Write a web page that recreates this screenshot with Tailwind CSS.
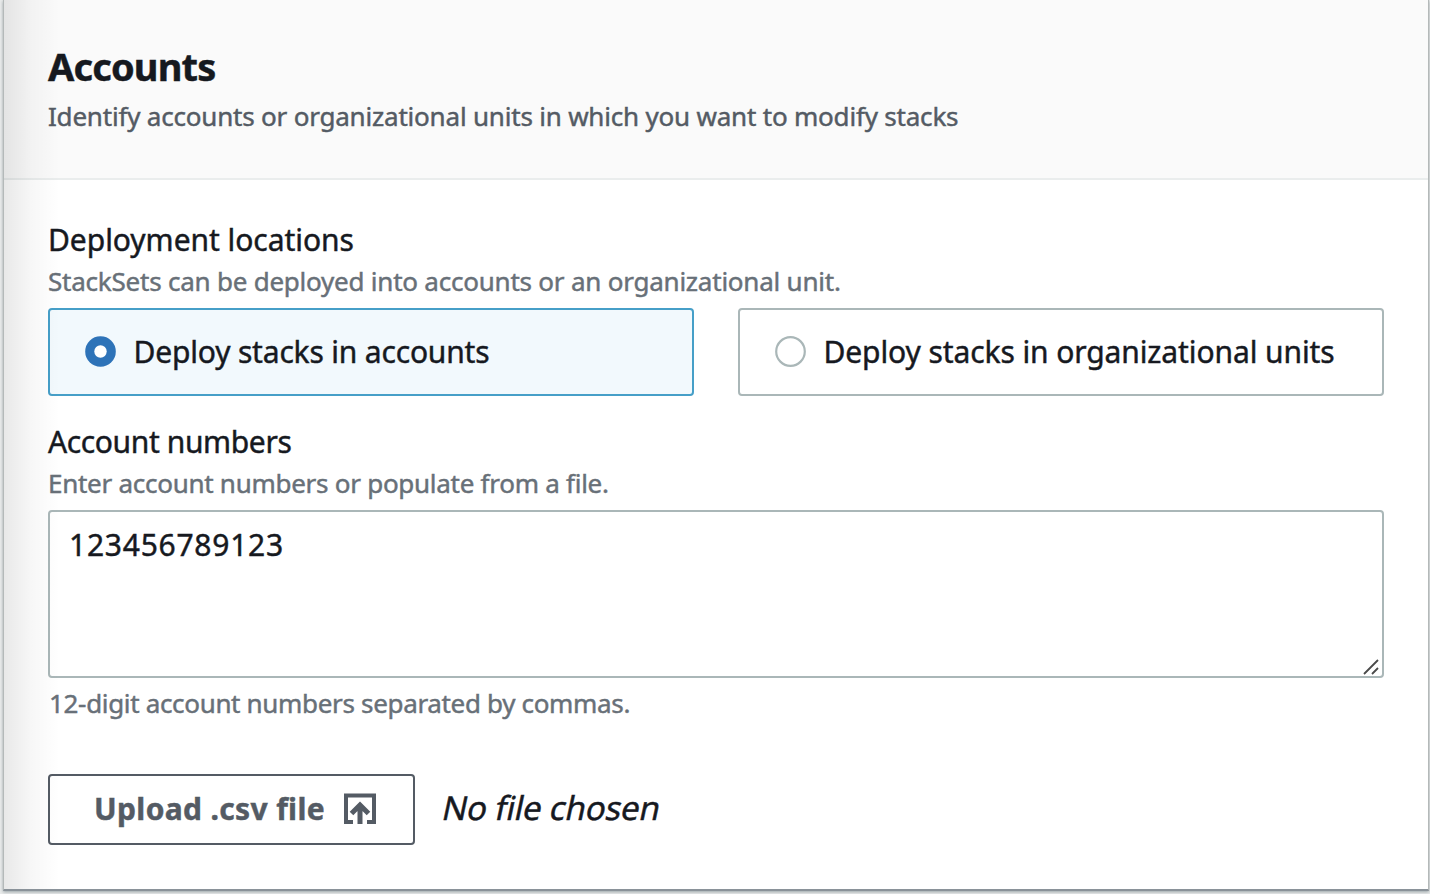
<!DOCTYPE html>
<html lang="en">
<head>
<meta charset="utf-8">
<title>Accounts</title>
<script src="https://cdn.jsdelivr.net/npm/@tailwindcss/browser@4"></script>
</head>
<body class="h-[894px] overflow-hidden bg-[#e9ebeb] font-['Noto_Sans',sans-serif] text-[#16191f] [-webkit-text-stroke:0.45px]">
<main class="relative ml-[3px] h-[891px] w-[1426px] border-x border-b-2 border-x-[#b4b9b9] border-b-[#8a9299] bg-white shadow-[0_1px_3px_rgba(0,28,36,0.35)]">
  <header class="h-[180px] border-b-2 border-[#eaeded] bg-[#fafafa] px-11 pt-[42px]">
    <h1 class="h-12 text-[38px] leading-[48px] font-bold tracking-[-0.85px] whitespace-nowrap">Accounts</h1>
    <p class="mt-2 h-9 text-[26px] leading-9 tracking-[-0.2px] whitespace-nowrap text-[#545b64]">Identify accounts or organizational units in which you want to modify stacks</p>
  </header>
  <section class="px-11 pt-10">
    <h2 class="h-10 text-[30px] leading-10 tracking-[-0.04px]">Deployment locations</h2>
    <p class="mt-[3px] h-9 text-[26px] leading-9 tracking-[-0.225px] whitespace-nowrap text-[#687078]">StackSets can be deployed into accounts or an organizational unit.</p>
    <div class="mt-[9px] flex w-[1336px] gap-11">
      <label class="flex h-[88px] flex-1 items-center rounded-[4px] border-2 border-[#469fc8] bg-[#f2f9fd] pl-[35px]">
        <svg class="mb-px size-[31px]" viewBox="0 0 31 31"><circle cx="15.5" cy="15.5" r="15.3" fill="#2e73b8"/><circle cx="15.5" cy="15.5" r="6.2" fill="#fff"/></svg>
        <span class="ml-[17.5px] text-[30px] leading-10 tracking-[-0.18px] whitespace-nowrap">Deploy stacks in accounts</span>
      </label>
      <label class="flex h-[88px] flex-1 items-center rounded-[4px] border-2 border-[#aab7b8] bg-white pl-[35px]">
        <svg class="mb-px size-[31px]" viewBox="0 0 31 31"><circle cx="15.5" cy="15.5" r="14.3" fill="#fff" stroke="#aab7b8" stroke-width="2.2"/></svg>
        <span class="ml-[17.5px] text-[30px] leading-10 tracking-[-0.1px] whitespace-nowrap">Deploy stacks in organizational units</span>
      </label>
    </div>
    <h2 class="mt-[26px] h-10 text-[30px] leading-10 tracking-[-0.38px]">Account numbers</h2>
    <p class="mt-[3px] h-9 text-[26px] leading-9 tracking-[-0.27px] whitespace-nowrap text-[#687078]">Enter account numbers or populate from a file.</p>
    <div class="mt-[9px] flex h-[168px] w-[1336px] justify-between rounded-[4px] border-2 border-[#aab7b8] bg-white pt-[13px] pl-[19px]">
      <span class="text-[30px] leading-10 tracking-[0.75px]">123456789123</span>
      <svg class="mr-[3px] mb-px size-4 self-end" viewBox="0 0 16 16" fill="none" stroke="#4a4a4a" stroke-width="1.8"><path d="M1 15 15 1M9 15l6-6"/></svg>
    </div>
    <p class="mt-[7px] ml-px h-9 text-[26px] leading-9 tracking-[-0.33px] whitespace-nowrap text-[#687078]">12-digit account numbers separated by commas.</p>
    <div class="mt-[53px] flex h-[71px] items-center">
      <button class="flex h-[71px] w-[367px] items-center rounded-[4px] border-2 border-[#545b64] bg-white pb-px pl-11 text-[#545b64]">
        <span class="w-[250px] text-left text-[30px] leading-10 font-bold tracking-[0.35px] whitespace-nowrap">Upload .csv file</span>
        <svg class="size-8" viewBox="0 0 32 32" fill="none" stroke="currentColor" stroke-width="4"><path d="M9 29H2V2.500h28V29h-7"/><path d="M16 31V12M7.500 20.500l8.500-8.500 8.500 8.500" stroke-width="5"/></svg>
      </button>
      <span class="mb-1 ml-[27.5px] inline-block h-10 -skew-x-12 text-[33px] leading-10 tracking-[-0.2px] whitespace-nowrap">No file chosen</span>
    </div>
  </section>
  <div class="pointer-events-none absolute inset-y-0 left-0 w-[56px] bg-linear-to-r from-black/9 via-black/3 to-transparent"></div>
</main>
</body>
</html>
